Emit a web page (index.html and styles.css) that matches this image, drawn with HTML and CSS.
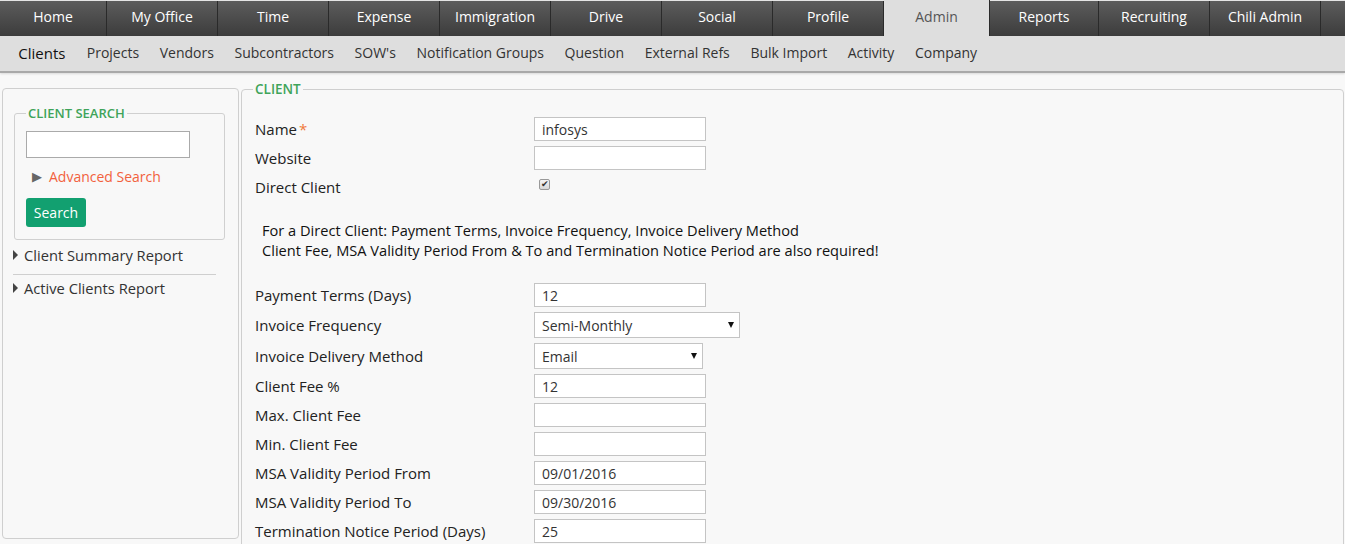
FILE: index.html
```html
<!DOCTYPE html>
<html>
<head>
<meta charset="utf-8">
<title>Clients</title>
<link rel="stylesheet" href="styles.css">
</head>
<body>
<nav class="topnav">
  <a class="tab tab-first">Home</a>
  <a class="tab">My Office</a>
  <a class="tab">Time</a>
  <a class="tab">Expense</a>
  <a class="tab">Immigration</a>
  <a class="tab">Drive</a>
  <a class="tab">Social</a>
  <a class="tab">Profile</a>
  <a class="tab tab-active">Admin</a>
  <a class="tab tab-reports">Reports</a>
  <a class="tab">Recruiting</a>
  <a class="tab">Chili Admin</a>
</nav>
<nav class="subnav">
  <a class="sub sub-active">Clients</a>
  <a class="sub">Projects</a>
  <a class="sub">Vendors</a>
  <a class="sub">Subcontractors</a>
  <a class="sub">SOW's</a>
  <a class="sub">Notification Groups</a>
  <a class="sub">Question</a>
  <a class="sub">External Refs</a>
  <a class="sub">Bulk Import</a>
  <a class="sub">Activity</a>
  <a class="sub">Company</a>
</nav>
<div class="main">
  <aside class="side">
    <fieldset class="search-box">
      <legend class="legend">CLIENT SEARCH</legend>
      <input class="search-input" type="text">
      <div class="adv"><span class="adv-arrow">▶</span><span class="adv-link">Advanced Search</span></div>
      <button class="btn">Search</button>
    </fieldset>
    <div class="report report-first"><span class="caret"></span>Client Summary Report</div>
    <div class="report report-second"><span class="caret"></span>Active Clients Report</div>
  </aside>
  <fieldset class="client">
    <legend class="legend legend-client">CLIENT</legend>
    <div class="rows rows-top">
      <div class="row"><label class="lbl">Name<span class="req">*</span></label><input class="inp" type="text" value="infosys"></div>
      <div class="row"><label class="lbl">Website</label><input class="inp" type="text"></div>
      <div class="row row-chk"><label class="lbl">Direct Client</label><input class="chk" type="checkbox" checked></div>
    </div>
    <div class="notice">For a Direct Client: Payment Terms, Invoice Frequency, Invoice Delivery Method<br>Client Fee, MSA Validity Period From &amp; To and Termination Notice Period are also required!</div>
    <div class="rows">
      <div class="row"><label class="lbl">Payment Terms (Days)</label><input class="inp" type="text" value="12"></div>
      <div class="row"><label class="lbl">Invoice Frequency</label><span class="sel-wrap sel-wide"><select class="sel"><option>Semi-Monthly</option></select></span></div>
      <div class="row"><label class="lbl">Invoice Delivery Method</label><span class="sel-wrap sel-narrow"><select class="sel"><option>Email</option></select></span></div>
      <div class="row"><label class="lbl">Client Fee %</label><input class="inp" type="text" value="12"></div>
      <div class="row"><label class="lbl">Max. Client Fee</label><input class="inp" type="text"></div>
      <div class="row"><label class="lbl">Min. Client Fee</label><input class="inp" type="text"></div>
      <div class="row"><label class="lbl">MSA Validity Period From</label><input class="inp" type="text" value="09/01/2016"></div>
      <div class="row"><label class="lbl">MSA Validity Period To</label><input class="inp" type="text" value="09/30/2016"></div>
      <div class="row"><label class="lbl">Termination Notice Period (Days)</label><input class="inp" type="text" value="25"></div>
    </div>
  </fieldset>
</div>
</body>
</html>
```
FILE: styles.css
```css
html, body {
  margin: 0;
  padding: 0;
}
body {
  font-family: "Open Sans", "Liberation Sans", sans-serif;
  background: #f8f8f8;
  color: #222;
  overflow: hidden;
}
.topnav {
  display: flex;
  height: 35px;
  border-top: 1px solid #e4e4e4;
  background: linear-gradient(#5c5c5c, #3c3c3c);
}
.tab {
  width: 110px;
  flex: none;
  border-right: 1px solid #2a2a2a;
  color: #fff;
  font-size: 14px;
  line-height: 32px;
  text-align: center;
}
.tab-first { width: 106px; }
.tab-active {
  width: 105px;
  background: #dedede;
  color: #555;
  margin-top: -1px;
  line-height: 34px;
}
.tab-reports { width: 108px; }
.subnav {
  display: flex;
  align-items: center;
  height: 33px;
  padding: 0 0 2px 8px;
  background: #dedede;
  border-bottom: 2px solid #a9a9a9;
  box-shadow: 0 1px 2px rgba(0,0,0,0.12);
}
.sub {
  padding: 0 10.3px;
  font-size: 14px;
  color: #333;
}
.sub-active {
  font-size: 15px;
  color: #111;
  padding-right: 11px;
}
.main {
  display: flex;
  align-items: flex-start;
  padding: 7px 1px 0 2px;
}
.side {
  flex: none;
  width: 237px;
  height: 451px;
  margin-top: 8px;
  border: 1px solid #cfcfcf;
  border-radius: 4px;
  padding: 15px 13px 0 11px;
  box-sizing: border-box;
}
.legend {
  padding: 0 2px;
  font-size: 13px;
  font-weight: 600;
  color: #3fa45a;
  line-height: 18px;
}
.search-box {
  margin: 0;
  border: 1px solid #d0d0d0;
  border-radius: 3px;
  padding: 9px 11px 12px 11px;
}
.search-input {
  display: block;
  width: 164px;
  height: 27px;
  box-sizing: border-box;
  border: 1px solid #aaa;
  background: #fff;
  margin: 0;
  padding: 0 4px;
}
.adv {
  display: flex;
  align-items: center;
  height: 20px;
  margin-top: 8px;
  padding-left: 6px;
  font-size: 14px;
}
.adv-arrow {
  font-size: 13px;
  color: #666;
  width: 17px;
}
.adv-link { color: #f2613d; }
.btn {
  display: block;
  margin-top: 12px;
  width: 60px;
  height: 29px;
  border: 0;
  border-radius: 3px;
  background: #12a070;
  color: #fff;
  font-family: "Open Sans", "Liberation Sans", sans-serif;
  font-size: 14px;
  padding: 0;
}
.report {
  display: flex;
  align-items: center;
  height: 20px;
  margin-left: -1px;
  font-size: 14.7px;
  color: #333;
}
.report-first {
  margin-top: 1px;
  padding: 4px 0 9px 0;
  border-bottom: 1px solid #cfcfcf;
  width: 203px;
}
.report-second {
  padding: 3px 0;
}
.caret {
  width: 0;
  height: 0;
  border-top: 5px solid transparent;
  border-bottom: 5px solid transparent;
  border-left: 5px solid #444;
  margin: 0 6px 0 0;
}
.client {
  flex: 1;
  margin: 0 0 0 2px;
  min-width: 0;
  height: 470px;
  border: 1px solid #cfcfcf;
  border-radius: 4px 4px 0 0;
  padding: 0 12px 0 13px;
}
.legend-client {
  font-size: 13.5px;
  margin-left: -2px;
}
.rows {
  display: flex;
  flex-direction: column;
}
.rows-top { padding-top: 19px; }
.row {
  display: flex;
  align-items: center;
  margin-bottom: 5px;
}
.row-chk { height: 24px; }
.lbl {
  width: 279px;
  flex: none;
  font-size: 15px;
  color: #222;
}
.req { color: #f07a3a; margin-left: 2px; }
.inp {
  width: 172px;
  height: 24px;
  box-sizing: border-box;
  border: 1px solid #c4c4c4;
  background: #fff;
  margin: 0;
  padding: 0 7px;
  font-family: "Open Sans", "Liberation Sans", sans-serif;
  font-size: 14px;
  color: #333;
}
.chk {
  appearance: none;
  -webkit-appearance: none;
  width: 11px;
  height: 11px;
  margin: 0 0 6px 5px;
  border: 1px solid #999;
  border-radius: 2px;
  background: linear-gradient(#f4f4f4, #d8d8d8);
  position: relative;
}
.chk::after {
  content: "✔";
  position: absolute;
  left: 1px;
  top: -3px;
  font-size: 9px;
  color: #333;
  line-height: 14px;
}
.notice {
  margin: 16px 0 23px 7px;
  font-size: 14.6px;
  line-height: 20px;
  color: #111;
}
.sel-wrap {
  position: relative;
  display: block;
  height: 26px;
}
.sel-wide { width: 206px; }
.sel-narrow { width: 169px; }
.sel {
  appearance: none;
  -webkit-appearance: none;
  width: 100%;
  height: 26px;
  box-sizing: border-box;
  border: 1px solid #c4c4c4;
  border-radius: 0;
  background: #fff;
  margin: 0;
  padding: 0 7px;
  font-family: "Open Sans", "Liberation Sans", sans-serif;
  font-size: 14px;
  color: #333;
}
.sel-wrap::after {
  content: "";
  position: absolute;
  right: 6px;
  top: 10px;
  border-left: 3.5px solid transparent;
  border-right: 3.5px solid transparent;
  border-top: 6px solid #111;
  pointer-events: none;
}
```
